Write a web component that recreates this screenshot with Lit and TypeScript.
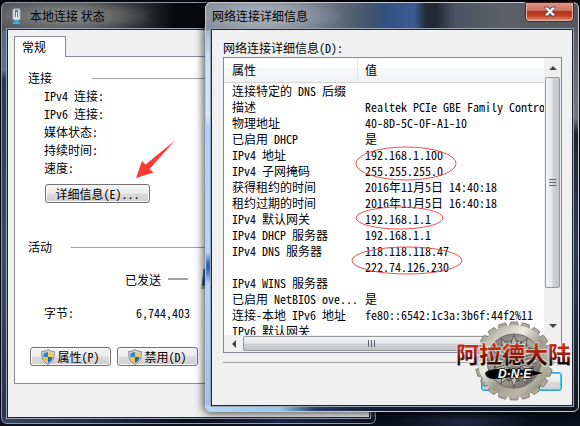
import { LitElement, html, css, svg } from "lit";
import { customElement } from "lit/decorators.js";

const sharedStyles = css`
  * {
    box-sizing: border-box;
  }
  button {
    height: 19px;
    padding: 0 6px;
    border: 1px solid #707070;
    border-radius: 3px;
    background: linear-gradient(#f4f4f4, #ebebeb 48%, #dcdcdc 52%, #cecece);
    box-shadow: inset 0 0 0 1px #fafafa;
    font: inherit;
    line-height: 17px;
    color: #000;
    display: inline-flex;
    align-items: center;
    justify-content: center;
    white-space: pre;
  }
  svg {
    display: block;
  }
  .window {
    border: 1px solid #8d98a8;
    border-radius: 6px;
    padding: 0 5px 5px;
  }
  .titlebar {
    display: flex;
    align-items: center;
    height: 26px;
  }
  .title {
    margin: 0;
    font: 12px "Noto Sans CJK SC", sans-serif;
    line-height: 18px;
  }
  .client {
    background: #f0f0f0;
    border: 1px solid #20242e;
    box-shadow: 0 0 0 1px #9aa6b6;
  }
`;

@customElement("status-window")
export class StatusWindow extends LitElement {
  static styles = [
    sharedStyles,
    css`
      :host {
        display: block;
      }
      .window {
        position: relative;
        background:
          radial-gradient(ellipse 90px 20px at 62px 13px, #858585 20%, #6c6c6c 50%, transparent) no-repeat,
          linear-gradient(90deg, #4d525c, #2b2d32 38%, #08090d 46%, #0b0d14) top / 100% 27px no-repeat,
          linear-gradient(90deg, #38455f, #15203a 35%, #0a0c16 50%, #1b2750 75%, #10121f) bottom / 100% 6px no-repeat,
          linear-gradient(#55607a, #62718f 16%, #2b3850 18%, #3d4a66 60%, #29324c);
      }
      .titlebar {
        gap: 9px;
        padding-left: 5px;
      }
      .client {
        padding: 6px 6px 33px;
      }
      .tab {
        position: relative;
        z-index: 1;
        width: 52px;
        height: 21px;
        margin-bottom: -1px;
        padding-left: 7px;
        line-height: 19px;
        background: #fff;
        border: 1px solid #898c95;
        border-bottom: 0;
      }
      .panel {
        background: #fff;
        border: 1px solid #898c95;
        padding: 12px 0 17px 13px;
      }
      .group {
        display: flex;
        align-items: center;
        gap: 40px;
        margin: 0;
        font: inherit;
        line-height: 18px;
      }
      .group::after {
        content: "";
        flex: 1;
        height: 1px;
        background: #a0a0a0;
      }
      .activity {
        gap: 19px;
        margin-top: 35px;
      }
      .facts {
        margin: 0;
        padding-left: 16px;
        line-height: 18px;
      }
      .details {
        margin: 7px 0 0 17px;
        width: 105px;
      }
      .sent {
        display: flex;
        align-items: center;
        gap: 7px;
        height: 18px;
        margin: 14px 0 0 97px;
      }
      .dash {
        width: 20px;
        height: 2px;
        background: #a0a0a0;
      }
      .monitor {
        margin-left: 6px;
      }
      .bytes {
        display: grid;
        grid-template-columns: 60px 86px;
        margin: 16px 0 0 16px;
        line-height: 18px;
      }
      .amount {
        text-align: right;
      }
      .actions {
        display: flex;
        gap: 6px;
        margin: 25px 0 0 2px;
      }
      .actions button {
        width: 81px;
        gap: 2px;
      }
      .arrow {
        position: absolute;
        left: 132px;
        top: 136px;
      }
    `,
  ];

  private shield() {
    return html`<svg width="14" height="16" viewBox="0 0 14 16" aria-hidden="true">
      <path d="M7 .5C5 2 3 2.5 .7 2.5C.5 8 1.5 12.5 7 15.5C12.5 12.5 13.5 8 13.3 2.5C11 2.5 9 2 7 .5Z" fill="#d5d9dd" stroke="#7d858c"></path>
      <path d="M7 2.5C5.5 3.5 4 4 2.5 4L2.4 8H7Z" fill="#2f83d8"></path>
      <path d="M7 2.5C8.5 3.5 10 4 11.5 4L11.6 8H7Z" fill="#f7cf38"></path>
      <path d="M2.4 8C2.9 11 4.5 12.8 7 14V8Z" fill="#f5c61f"></path>
      <path d="M11.6 8C11.1 11 9.5 12.8 7 14V8Z" fill="#1c68c0"></path>
    </svg>`;
  }

  render() {
    const facts = ["IPv4 连接:", "IPv6 连接:", "媒体状态:", "持续时间:", "速度:"];
    return html`<section class="window">
      <header class="titlebar">
        <svg width="9" height="17" viewBox="0 0 9 17" aria-hidden="true">
          <rect x="1" y="1" width="7" height="11" rx="1" fill="#dfe6ec" stroke="#a6b4bf"></rect>
          <rect x="3" y="2" width="3" height="7" fill="#64727c"></rect>
          <path d="M4 4h1v5h-1z" fill="#f4f8fa"></path>
          <path d="M3 12h3v2h2v2H1v-2h2z" fill="#27b4ea"></path>
        </svg>
        <h1 class="title">本地连接 状态</h1>
      </header>
      <div class="client">
        <div class="tab">常规</div>
        <div class="panel">
          <h2 class="group">连接</h2>
          <div class="facts">${facts.map((fact) => html`<div>${fact}</div>`)}</div>
          <button class="details">详细信息(E)...</button>
          <h2 class="group activity">活动</h2>
          <div class="sent">
            <span>已发送</span>
            <span class="dash"></span>
            <svg class="monitor" width="34" height="22" viewBox="0 0 34 22" aria-hidden="true">
              <path d="M3 1H32V18H1Z" fill="#1c4fa8" stroke="#777"></path>
              <path d="M0 20H34" stroke="#aaa" stroke-width="2"></path>
            </svg>
          </div>
          <div class="bytes"><span>字节:</span><span class="amount">6,744,403</span></div>
          <div class="actions">
            <button>${this.shield()}属性(P)</button>
            <button>${this.shield()}禁用(D)</button>
          </div>
        </div>
      </div>
      <svg class="arrow" width="42" height="40" viewBox="0 0 42 40" aria-hidden="true">
        <path d="M41 1.5L15.500 30L19.500 33.500L2 39L8 22L11.500 25.500Z" fill="#fb3a36"></path>
      </svg>
    </section>`;
  }
}

@customElement("details-window")
export class DetailsWindow extends LitElement {
  static styles = [
    sharedStyles,
    css`
      :host {
        display: block;
      }
      .window {
        position: relative;
        border-color: #c3ccd6;
        background:
          radial-gradient(ellipse 80px 24px at 56px 13px, #a3a9b2 30%, transparent) no-repeat,
          linear-gradient(90deg, #7e8896, #626e7d 35%, #46566c 43%, #34507f 48%, #3b5c94 56%, #252c37 59%, #242a34 62%, #4c5364 67%, #5e6066 80%, #55575c) top / 100% 27px no-repeat,
          linear-gradient(90deg, #b4d6f8, #9ec3ea 20%, #24406c 29%, #121c33 45%, #10141f) bottom / 100% 6px no-repeat,
          linear-gradient(#8d98a8, #cbe1f5 14%, #d0e6fa 28%, #a9d2fc 30%, #b2d6fb 61%, #2d66b4 64%, #2d66b4 65%, #b0d4fa 69%, #9cc0e8) left / 50% 100% no-repeat,
          linear-gradient(#55575c, #77787c 28%, #20232c 32%, #2b3c58 60%, #141824);
        box-shadow: 0 0 8px 2px rgba(0, 0, 0, 0.65);
      }
      .titlebar {
        justify-content: space-between;
        padding-left: 1px;
      }
      .close {
        align-self: flex-start;
        width: 47px;
        height: 18px;
        border: 1px solid #e4b7ae;
        border-top: 0;
        border-radius: 0 0 4px 4px;
        background: linear-gradient(#dc9388, #cf7263 45%, #b9301a 50%, #c33f23 75%, #e08466);
        box-shadow: 0 0 0 1px #4a2420;
      }
      .client {
        padding: 9px 10px 14px 11px;
      }
      .caption {
        line-height: 18px;
      }
      .list {
        position: relative;
        display: grid;
        grid-template: 277px 17px / minmax(0, 1fr) 17px;
        background: #fff;
        border: 1px solid #828790;
      }
      .viewport {
        overflow: hidden;
      }
      table {
        width: 100%;
        table-layout: fixed;
        border-collapse: separate;
        border-spacing: 0;
      }
      th,
      td {
        height: 16px;
        padding: 0 0 0 8px;
        font-weight: 400;
        text-align: left;
        line-height: 16px;
        white-space: pre;
        overflow: hidden;
      }
      th {
        height: 25px;
        background: linear-gradient(#fff 40%, #f7f8fa 42%, #f1f2f4);
        border-bottom: 1px solid #d5d5d5;
      }
      .name {
        width: 134px;
      }
      th.name {
        border-right: 1px solid #e0e3e6;
      }
      .value {
        padding-left: 7px;
      }
      .vbar,
      .hbar {
        display: flex;
        align-items: center;
        background: #f0f0f0;
      }
      .vbar {
        flex-direction: column;
      }
      .step {
        flex: 0 0 19px;
        display: grid;
        place-items: center;
      }
      .thumb {
        border: 1px solid #979797;
        border-radius: 2px;
        display: grid;
        place-items: center;
      }
      .vbar .thumb {
        width: 15px;
        height: 211px;
        background: linear-gradient(90deg, #f6f6f6, #e6e7e9 45%, #cfd1d4 55%, #c4c6ca);
      }
      .vbar .last {
        margin-top: auto;
      }
      .hbar .thumb {
        flex: 0 1 257px;
        height: 15px;
        background: linear-gradient(#f6f6f6, #e6e7e9 45%, #cfd1d4 55%, #c4c6ca);
      }
      .hbar .last {
        margin-left: auto;
      }
      .corner {
        background: #f0f0f0;
      }
      .marks {
        position: absolute;
        left: 0;
        top: 0;
      }
      hr {
        height: 1px;
        margin: 9px 0;
        border: 0;
        background: #a0a0a0;
      }
      .footer {
        display: flex;
        justify-content: flex-end;
      }
      .dismiss {
        width: 81px;
        border-color: #2f9fd0;
        box-shadow: inset 0 0 0 1px #46cdf5;
      }
      .logo {
        position: absolute;
        right: 3px;
        bottom: 7px;
      }
      .brand {
        font: 700 23px "Noto Sans CJK SC", sans-serif;
      }
      .dne {
        font: italic 700 12px "Liberation Sans", sans-serif;
      }
    `,
  ];

  private rows: [string, string][] = [
    ["连接特定的 DNS 后缀", ""],
    ["描述", "Realtek PCIe GBE Family Controller"],
    ["物理地址", "40-8D-5C-0F-A1-10"],
    ["已启用 DHCP", "是"],
    ["IPv4 地址", "192.168.1.100"],
    ["IPv4 子网掩码", "255.255.255.0"],
    ["获得租约的时间", "2016年11月5日 14:40:18"],
    ["租约过期的时间", "2016年11月5日 16:40:18"],
    ["IPv4 默认网关", "192.168.1.1"],
    ["IPv4 DHCP 服务器", "192.168.1.1"],
    ["IPv4 DNS 服务器", "118.118.118.47"],
    ["", "222.74.126.230"],
    ["IPv4 WINS 服务器", ""],
    ["已启用 NetBIOS ove...", "是"],
    ["连接-本地 IPv6 地址", "fe80::6542:1c3a:3b6f:44f2%11"],
    ["IPv6 默认网关", ""],
  ];

  private triangle(d: string) {
    return html`<svg width="8" height="8" viewBox="0 0 8 8" aria-hidden="true"><path d=${d} fill="#404348"></path></svg>`;
  }

  private logo() {
    const teeth = Array.from({ length: 20 }, (_, i) => i * 18);
    const spokes = Array.from({ length: 12 }, (_, i) => i * 30);
    return html`<svg class="logo" width="122" height="86" viewBox="0 0 122 86" role="img" aria-label="阿拉德大陆 D·N·E">
      <defs>
        <linearGradient id="metal" x1="0" y1="0" x2="1" y2="1">
          <stop offset="0" stop-color="#8b877c"></stop>
          <stop offset="0.2" stop-color="#c5c2b6"></stop>
          <stop offset="0.35" stop-color="#eeece4"></stop>
          <stop offset="0.55" stop-color="#9d998c"></stop>
          <stop offset="0.75" stop-color="#bab6a8"></stop>
          <stop offset="1" stop-color="#68645a"></stop>
        </linearGradient>
        <linearGradient id="core" x1="0" y1="0" x2="1" y2="1">
          <stop offset="0" stop-color="#77746d"></stop>
          <stop offset="0.5" stop-color="#a9a79f"></stop>
          <stop offset="1" stop-color="#5c5951"></stop>
        </linearGradient>
        <linearGradient id="blood" x1="0" y1="0" x2="0" y2="1">
          <stop offset="0.25" stop-color="#c8331a"></stop>
          <stop offset="0.55" stop-color="#9c1c10"></stop>
          <stop offset="0.8" stop-color="#240a06"></stop>
        </linearGradient>
      </defs>
      ${teeth.map(
        (a) => svg`<path d="M56 10L57.5 4H64.5L66 10Z" transform="rotate(${a} 61 43)" fill="#aeab9e" stroke="#6a675d" stroke-width=".7"></path>`,
      )}
      <circle cx="61" cy="43" r="36" fill="url(#metal)"></circle>
      <circle cx="61" cy="43" r="27" fill="url(#core)" stroke="#6a675e" stroke-width="1"></circle>
      <circle cx="61" cy="43" r="20" fill="none" stroke="#56534b" stroke-dasharray="3 2" stroke-width="2"></circle>
      ${spokes.map(
        (a) => svg`<path d="M61 37L58 25L61 17L64 25Z" transform="rotate(${a} 61 43)" fill="#b7b5ad" stroke="#4b4942" stroke-width=".8"></path>`,
      )}
      <circle cx="61" cy="43" r="9" fill="#85827a" stroke="#4b4942"></circle>
      <text class="brand" x="3" y="45" fill="url(#blood)" stroke="#fff" stroke-opacity=".5" stroke-width="2" paint-order="stroke">阿拉德大陆</text>
      <path d="M32 55Q35 51 46 51L76 52L90 55L78 58L60 59L42 61Q33 61 32 55Z" fill="#050505"></path>
      <text class="dne" x="45" y="60" fill="#fff" stroke="#111" stroke-width="1.5" paint-order="stroke">D·N·E</text>
    </svg>`;
  }

  render() {
    return html`<section class="window">
      <header class="titlebar">
        <h1 class="title">网络连接详细信息</h1>
        <button class="close" aria-label="关闭">
          <svg width="12" height="11" viewBox="0 0 12 11" aria-hidden="true">
            <path d="M1 1H4L6 3.5L8 1H11V2.5L8 5.5L11 8.5V10H8L6 7.5L4 10H1V8.5L4 5.5L1 2.5Z" fill="#fff" stroke="#4b4e5c"></path>
          </svg>
        </button>
      </header>
      <div class="client">
        <div class="caption" id="caption">网络连接详细信息(D):</div>
        <div class="list">
          <div class="viewport">
            <table aria-labelledby="caption">
              <thead>
                <tr><th class="name">属性</th><th class="value">值</th></tr>
              </thead>
              <tbody>
                ${this.rows.map(([name, value]) => html`<tr><td class="name">${name}</td><td class="value">${value}</td></tr>`)}
              </tbody>
            </table>
          </div>
          <div class="vbar">
            <span class="step">${this.triangle("M0 6L4 2L8 6Z")}</span>
            <span class="thumb">
              <svg width="7" height="8" viewBox="0 0 7 8"><path d="M0 .5H7M0 3.5H7M0 6.5H7" stroke="#5f6368"></path></svg>
            </span>
            <span class="step last">${this.triangle("M0 2L4 6L8 2Z")}</span>
          </div>
          <div class="hbar">
            <span class="step">${this.triangle("M6 0L2 4L6 8Z")}</span>
            <span class="thumb">
              <svg width="8" height="7" viewBox="0 0 8 7"><path d="M.5 0V7M3.5 0V7M6.5 0V7" stroke="#5f6368"></path></svg>
            </span>
            <span class="step last">${this.triangle("M2 0L6 4L2 8Z")}</span>
          </div>
          <div class="corner"></div>
          <svg class="marks" width="260" height="230" viewBox="0 0 260 230" aria-hidden="true">
            <g fill="none" stroke="#f0504d">
              <ellipse cx="182" cy="105.5" rx="50" ry="16.5"></ellipse>
              <ellipse cx="175.5" cy="160" rx="43.5" ry="11"></ellipse>
              <ellipse cx="183" cy="202.5" rx="55" ry="13.5"></ellipse>
            </g>
          </svg>
        </div>
        <hr />
        <div class="footer"><button class="dismiss">关闭(C)</button></div>
      </div>
      ${this.logo()}
    </section>`;
  }
}

@customElement("app-root")
export class AppRoot extends LitElement {
  static styles = css`
    :host {
      display: block;
      position: relative;
      min-height: 100vh;
      overflow: hidden;
      background:
        radial-gradient(ellipse 70px 12px at 80% 99%, #232b44, transparent),
        linear-gradient(#08080b, #05060a 60%, #0c0f1c);
      font: 12px "Noto Sans Mono CJK SC", "Noto Sans CJK SC", "Liberation Mono", monospace;
      color: #000;
    }
    .status {
      position: absolute;
      left: 1px;
      right: 204px;
      top: 2px;
    }
    .details {
      position: absolute;
      left: 205px;
      right: 1px;
      top: 2px;
    }
  `;

  render() {
    return html`
      <status-window class="status"></status-window>
      <details-window class="details"></details-window>
    `;
  }
}
